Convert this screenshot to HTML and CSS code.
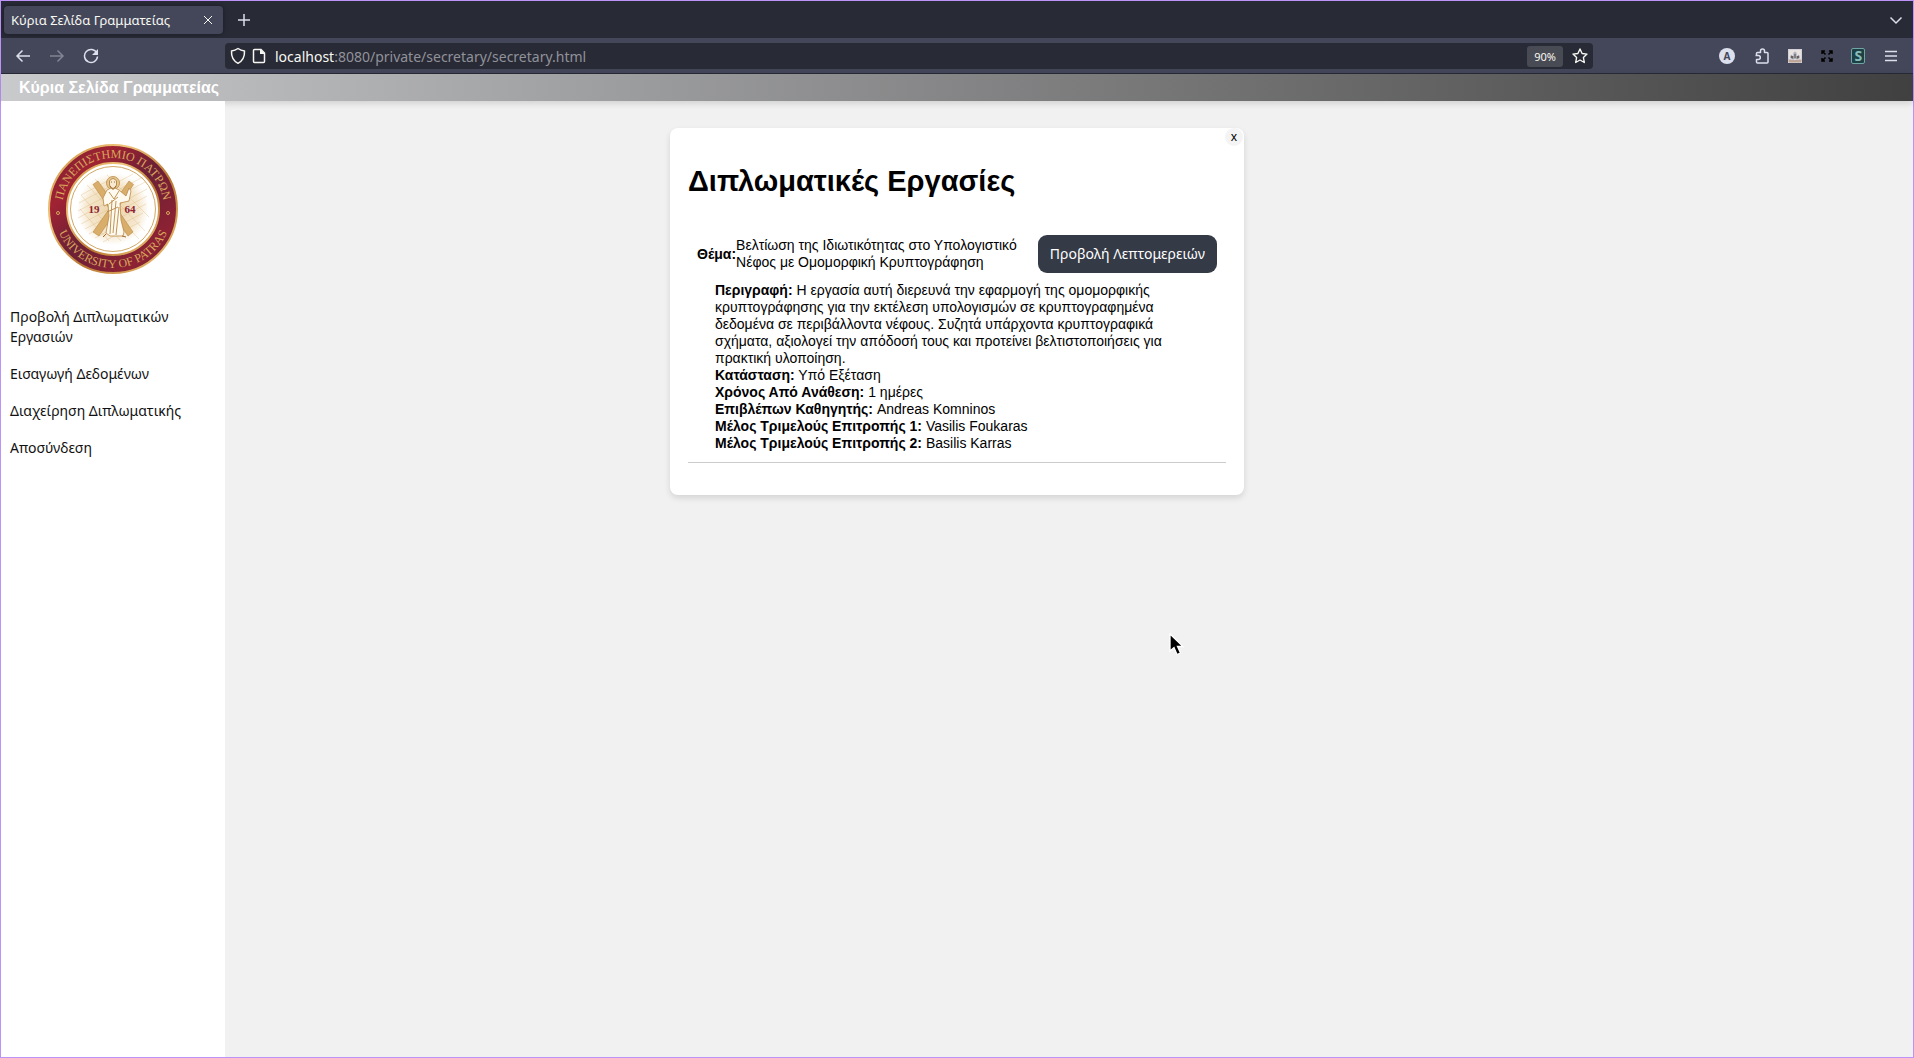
FILE: index.html
```html
<!DOCTYPE html>
<html lang="el">
<head>
<meta charset="utf-8">
<meta name="viewport" content="width=device-width, initial-scale=1">
<title>Κύρια Σελίδα Γραμματείας</title>
<link rel="stylesheet" href="styles.css">
</head>
<body>
<div class="window">
  <div class="tabstrip">
    <div class="tab">
      <span class="tab-title">Κύρια Σελίδα Γραμματείας</span>
      <button class="icon-btn" type="button" aria-label="Κλείσιμο καρτέλας"><svg width="10" height="10" viewBox="0 0 10 10"><path d="M1 1l8 8M9 1l-8 8"/></svg></button>
    </div>
    <button class="icon-btn" type="button" aria-label="Νέα καρτέλα"><svg width="14" height="14" viewBox="0 0 14 14"><path d="M7 1v12M1 7h12" stroke-width="1.5"/></svg></button>
    <button class="icon-btn tab-list" type="button" aria-label="Λίστα καρτελών"><svg width="14" height="14" viewBox="0 0 14 14"><path d="M1.500 4.500L7 10l5.500-5.500" stroke-width="1.5"/></svg></button>
  </div>
  <div class="toolbar">
    <div class="nav-buttons">
      <button class="icon-btn" type="button" aria-label="Πίσω"><svg width="16" height="16" viewBox="0 0 16 16"><path d="M15 8H2M7.500 2.500L2 8l5.500 5.500" stroke-width="1.5"/></svg></button>
      <button class="icon-btn dim" type="button" aria-label="Μπροστά"><svg width="16" height="16" viewBox="0 0 16 16"><path d="M1 8h13M8.500 2.500L14 8l-5.500 5.500" stroke-width="1.5"/></svg></button>
      <button class="icon-btn" type="button" aria-label="Ανανέωση"><svg width="16" height="16" viewBox="0 0 16 16"><path d="M13.800 5A6.500 6.500 0 1 0 14.500 8.500" stroke-width="1.5"/><path d="M15 1v6H9z" fill="currentColor" stroke="none"/></svg></button>
    </div>
    <div class="urlbar">
      <svg width="16" height="18" viewBox="0 0 16 18"><path d="M8 1.500c2.200 1.600 4.300 2.200 6.500 2.400C14.800 9.500 12.500 14 8 16.300 3.500 14 1.200 9.500 1.500 3.900 3.700 3.700 5.800 3.100 8 1.500z" stroke-width="1.500" stroke-linejoin="round"/></svg>
      <svg width="14" height="16" viewBox="0 0 14 16"><path d="M2.500 1.500H9l3.500 3.500v8.500a1 1 0 0 1-1 1h-9a1 1 0 0 1-1-1v-11a1 1 0 0 1 1-1z" stroke-width="1.500"/><path d="M8 1v5h5z" fill="currentColor" stroke="none"/></svg>
      <span class="url"><span class="host">localhost</span>:8080/private/secretary/secretary.html</span>
      <button class="zoom" type="button">90%</button>
      <button class="icon-btn" type="button" aria-label="Σελιδοδείκτης"><svg width="16" height="16" viewBox="0 0 16 16"><path d="M8 1l2.100 4.500 4.900.6-3.600 3.400.9 5L8 12l-4.300 2.500.9-5L1 6.100l4.900-.6z" stroke-width="1.400" stroke-linejoin="round"/></svg></button>
    </div>
    <div class="extensions">
      <button class="icon-btn" type="button" aria-label="Λογαριασμός"><span class="avatar">A</span></button>
      <button class="icon-btn" type="button" aria-label="Επεκτάσεις"><svg width="16" height="16" viewBox="0 0 16 16"><path d="M2.500 7.500V5.500a1 1 0 0 1 1-1h3V3a2 2 0 0 1 4 0v1.500H13a1 1 0 0 1 1 1V14a1 1 0 0 1-1 1H3.500a1 1 0 0 1-1-1v-2.500h1.800a2 2 0 0 0 0-4H1.500" stroke-width="1.500" stroke-linejoin="round"/></svg></button>
      <button class="icon-btn" type="button" aria-label="Πρόσθετο"><svg width="14" height="14" viewBox="0 0 14 14" stroke="none"><path d="M0 0h14v14H0z" fill="#bfa595"/><path d="M1 1h12v9H1z" fill="#ece4dc"/><path d="M2 9c0-3 2-4 3-2V5c0-3 4-3 4 0v2c1-2 3-1 3 2-2 2-8 2-10 0z" fill="#6b625c"/><path d="M6 4h2v6H6z" fill="#252321"/></svg></button>
      <button class="icon-btn black" type="button" aria-label="Πλήρης οθόνη"><svg width="12" height="12" viewBox="0 0 12 12"><path d="M1 4V1h3M8 1h3v3M11 8v3H8M4 11H1V8M1 1l3.500 3.500M11 1L7.500 4.500M11 11L7.500 7.500M1 11l3.500-3.500" stroke-width="1.500"/></svg></button>
      <button class="icon-btn" type="button" aria-label="Stylus"><span class="stylus">S</span></button>
      <button class="icon-btn" type="button" aria-label="Μενού"><svg width="14" height="12" viewBox="0 0 14 12"><path d="M1 1.500h12M1 6h12M1 10.500h12" stroke-width="1.300"/></svg></button>
    </div>
  </div>

  <header class="page-header">Κύρια Σελίδα Γραμματείας</header>
  <div class="page">
    <aside class="sidebar">
      <svg class="seal" viewBox="0 0 132 132" role="img" aria-label="Πανεπιστήμιο Πατρών">
        <defs>
          <linearGradient id="red" x1="0" y1="0" x2="1" y2="1">
            <stop offset="0" stop-color="#74202f"/><stop offset=".25" stop-color="#a02333"/><stop offset=".5" stop-color="#6b2036"/><stop offset=".8" stop-color="#8d2233"/><stop offset="1" stop-color="#5b2037"/>
          </linearGradient>
          <linearGradient id="gold" x1="0" y1="0" x2="1" y2="1">
            <stop offset="0" stop-color="#c98b3b"/><stop offset=".3" stop-color="#f0c67b"/><stop offset=".6" stop-color="#b9772f"/><stop offset="1" stop-color="#f4cc80"/>
          </linearGradient>
          <radialGradient id="glow"><stop offset="0" stop-color="#ecd3a8"/><stop offset=".7" stop-color="#f5e6cc"/><stop offset="1" stop-color="#fff"/></radialGradient>
          <path id="arc-top" d="M15 66a51 51 0 1 1 102 0"/>
          <path id="arc-bottom" d="M7 66a59 59 0 0 0 118 0"/>
        </defs>
        <circle cx="66" cy="66" r="64" fill="url(#red)" stroke="url(#gold)" stroke-width="2"/>
        <circle cx="66" cy="66" r="46" fill="#fff" stroke="url(#gold)" stroke-width="2"/>
        <circle cx="66" cy="66" r="42.500" fill="none" stroke="#d2a765" stroke-width="1"/>
        <circle cx="66" cy="66" r="36" fill="url(#glow)"/>
        <path d="M34 52l34-18M32 60l54-29M31 68l65-34M31 75l67-36M34 81l66-35M38 86l62-33M42 91l57-30M48 95l48-25M56 99l37-20M40 42l52 54M34 52l40 46M48 36l50 52M60 32l42 42M33 66l29 32" fill="none" stroke="#d8b477" stroke-width="1" opacity=".35"/>
        <path d="M46 41.500l5-3.500 35 51-5 4zM82 38l4.500 3.500L52 93l-6-4z" fill="#d9ae6b" stroke="#b98945" stroke-width=".6"/>
        <circle cx="66" cy="40" r="6.500" fill="#e7c78f" stroke="#b98945" stroke-width=".8"/>
        <path d="M60 47l-4 8 1 8 4-2 1 12-3 17 4 3h13l1-4-3-12-1-17 9-2 2-10-2-3-3 8-7-6-6-3z" fill="#fffaf0" stroke="#b98945" stroke-width=".8"/>
        <path d="M62 49l5 7 5-8M65 57l-2 34M69 58l-3 32M72 64l-3 28M62 61l9-7M60 69l11-5" fill="none" stroke="#b98945" stroke-width=".9"/>
        <path d="M62.500 38q3.500-5 7 0v4q-3.500 9-7 0z" fill="#f8ead0" stroke="#a87938" stroke-width=".8"/>
        <path d="M63 43q3 5 6 0M64 39h1M67 39h1M59 91l-3 3M75 93l4 1" fill="none" stroke="#9f6b31"/>
        <text class="ring-text"><textPath href="#arc-top" startOffset="50%">ΠΑΝΕΠΙΣΤΗΜΙΟ ΠΑΤΡΩΝ</textPath></text>
        <text class="ring-text"><textPath href="#arc-bottom" startOffset="50%">UNIVERSITY OF PATRAS</textPath></text>
        <circle cx="11" cy="70" r="1.500" fill="none" stroke="#d9a65c"/>
        <circle cx="121" cy="70" r="1.500" fill="none" stroke="#d9a65c"/>
        <text class="year" x="47" y="70">19</text>
        <text class="year" x="83" y="70">64</text>
      </svg>
      <nav class="menu">
        <a href="#theses">Προβολή Διπλωματικών Εργασιών</a>
        <a href="#import">Εισαγωγή Δεδομένων</a>
        <a href="#manage">Διαχείρηση Διπλωματικής</a>
        <a href="#logout">Αποσύνδεση</a>
      </nav>
    </aside>
    <main class="content">
      <section class="card" id="theses">
        <button class="card-close" type="button">x</button>
        <h1>Διπλωματικές Εργασίες</h1>
        <article class="thesis">
          <div class="thesis-head">
            <strong>Θέμα:</strong>
            <span class="thesis-title">Βελτίωση της Ιδιωτικότητας στο Υπολογιστικό Νέφος με Ομομορφική Κρυπτογράφηση</span>
            <button class="details-btn" type="button">Προβολή Λεπτομερειών</button>
          </div>
          <div class="details">
            <p><strong>Περιγραφή:</strong> Η εργασία αυτή διερευνά την εφαρμογή της ομομορφικής κρυπτογράφησης για την εκτέλεση υπολογισμών σε κρυπτογραφημένα δεδομένα σε περιβάλλοντα νέφους. Συζητά υπάρχοντα κρυπτογραφικά σχήματα, αξιολογεί την απόδοσή τους και προτείνει βελτιστοποιήσεις για πρακτική υλοποίηση.</p>
            <p><strong>Κατάσταση:</strong> Υπό Εξέταση</p>
            <p><strong>Χρόνος Από Ανάθεση:</strong> 1 ημέρες</p>
            <p><strong>Επιβλέπων Καθηγητής:</strong> Andreas Komninos</p>
            <p><strong>Μέλος Τριμελούς Επιτροπής 1:</strong> Vasilis Foukaras</p>
            <p><strong>Μέλος Τριμελούς Επιτροπής 2:</strong> Basilis Karras</p>
          </div>
        </article>
      </section>
    </main>
  </div>
  <svg class="pointer" width="16" height="24" viewBox="0 0 16 24"><path d="M1 1v17l4-3.500L8 21.500l3.500-1.500-3-6.500H14z" fill="#000" stroke="#fff" stroke-width="1.300"/></svg>
</div>
</body>
</html>
```
FILE: styles.css
```css
* { box-sizing: border-box; }

body {
  margin: 0;
  font-family: "Liberation Sans", Arial, sans-serif;
  font-size: 14px;
  line-height: 17px;
  color: #000;
}

button {
  font: inherit;
  color: inherit;
  border: 0;
  padding: 0;
  background: none;
}

.window {
  position: relative;
  display: flex;
  flex-direction: column;
  min-height: 100vh;
  border: 1px solid #bd93f9;
  background: #f1f1f1;
}

/* Browser frame */
.tabstrip,
.toolbar {
  display: flex;
  align-items: center;
  color: #dcdfec;
  font-family: "Noto Sans", sans-serif;
}

.tabstrip svg,
.toolbar svg {
  display: block;
  fill: none;
  stroke: currentColor;
}

.tabstrip {
  height: 37px;
  padding: 1px 10px 0 3px;
  gap: 14px;
  background: #282a36;
}

.tab {
  display: flex;
  align-items: center;
  justify-content: space-between;
  width: 219px;
  height: 28px;
  padding: 0 10px 0 7px;
  border-radius: 4px;
  background: #44475a;
  box-shadow: 0 0 4px rgba(0, 0, 0, .4);
  color: #f8f8f2;
  font-size: 13px;
}

.tab-list { margin-left: auto; }

.toolbar {
  height: 36px;
  padding-top: 1px;
  border-bottom: 1px solid #282a36;
  background: #44475a;
}

.nav-buttons {
  display: flex;
  gap: 18px;
  width: 224px;
  padding-left: 14px;
}

.dim { opacity: .4; }

.urlbar {
  display: flex;
  flex: 1;
  align-items: center;
  gap: 6px;
  height: 26px;
  padding: 0 5px;
  border-radius: 4px;
  background: #282a36;
  color: #f8f8f2;
}

.url {
  flex: 1;
  padding-left: 3px;
  color: #919299;
  font-size: 14px;
}

.host { color: #f8f8f2; }

.zoom {
  height: 21px;
  margin-right: 3px;
  padding: 0 7px;
  border-radius: 3px;
  background: #484a54;
  font-size: 11px;
}

.extensions {
  display: flex;
  align-items: center;
  justify-content: space-between;
  width: 320px;
  padding: 0 15px 0 126px;
}

.avatar {
  display: block;
  width: 16px;
  height: 16px;
  border-radius: 50%;
  background: #dcdfec;
  color: #44475a;
  font-size: 10px;
  font-weight: 700;
  line-height: 16px;
}

.black { color: #000; }

.stylus {
  display: block;
  width: 14px;
  height: 16px;
  border: 1px solid #6fa5a5;
  border-radius: 2px;
  background: #1d4045;
  color: #88bcbc;
  font-size: 14px;
  font-weight: 700;
  line-height: 14px;
}

/* Page */
.page-header {
  position: relative;
  padding: 5px 18px;
  background: linear-gradient(to right, #c9cacc, #404040);
  box-shadow: 0 2px 7px rgba(0, 0, 0, .15);
  color: #fff;
  font-size: 16px;
  font-weight: 700;
}

.page {
  display: flex;
  flex: 1;
}

.sidebar {
  position: relative;
  width: 224px;
  padding: 42px 9px 0;
  background: #fff;
}

.seal {
  display: block;
  width: 132px;
  margin: 0 auto;
}

.ring-text {
  fill: #d9a65c;
  font: 12px "Liberation Serif", serif;
  text-anchor: middle;
}

.year {
  fill: #8d2233;
  font: bold 11px "Liberation Serif", serif;
  text-anchor: middle;
}

.menu {
  display: flex;
  flex-direction: column;
  gap: 17px;
  padding-top: 32px;
  font-family: "Noto Sans", sans-serif;
  font-size: 14px;
  line-height: 20px;
}

.menu a {
  color: #111;
  text-decoration: none;
}

.content {
  flex: 1;
  padding-top: 27px;
}

.card {
  position: relative;
  width: 574px;
  max-width: 100%;
  margin: 0 auto;
  padding: 35px 18px 32px;
  border-radius: 8px;
  background: #fff;
  box-shadow: 0 3px 6px rgba(0, 0, 0, .12);
}

/* On wide windows the card is centred on the window, not on the content column. */
@media (min-width: 1100px) {
  .content { padding-right: 224px; }
}

.card-close {
  position: absolute;
  top: 0;
  right: 1px;
  width: 18px;
  height: 18px;
  border-radius: 50%;
  background: #f4f4f4;
  font-family: "Noto Sans", sans-serif;
  font-size: 12px;
  line-height: 18px;
}

h1 {
  margin: 0 0 27px;
  font-size: 29px;
  line-height: 36px;
}

.thesis {
  padding-bottom: 10px;
  border-bottom: 1px solid #ccc;
}

.thesis-head {
  display: flex;
  align-items: center;
  padding: 9px;
}

.thesis-title {
  flex: 1;
  margin-right: 12px;
}

.details-btn {
  padding: 9px 12px;
  border-radius: 9px;
  background: #343a46;
  color: #fff;
  font-family: "Noto Sans", sans-serif;
  font-size: 14px;
  line-height: 20px;
}

.details { padding: 0 27px; }

.details p { margin: 0; }

.pointer {
  position: absolute;
  left: 1168px;
  top: 632px;
}
```
